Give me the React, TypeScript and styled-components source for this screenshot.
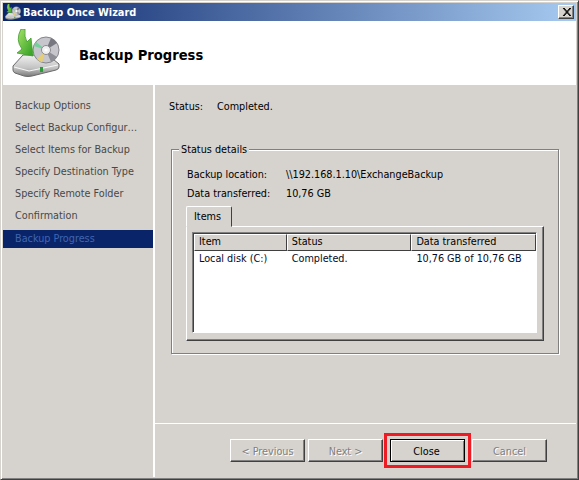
import React from 'react';
import styled, { createGlobalStyle } from 'styled-components';

const GlobalStyle = createGlobalStyle`
  html, body {
    margin: 0;
    padding: 0;
    background: #d6d3ce;
  }
  body {
    font-family: "DejaVu Sans Condensed", "Liberation Sans", Arial, sans-serif;
    font-size: 10.75px;
    color: #000;
  }
`;

const STEPS = [
  'Backup Options',
  'Select Backup Configur…',
  'Select Items for Backup',
  'Specify Destination Type',
  'Specify Remote Folder',
  'Confirmation',
  'Backup Progress',
];

const BackupIcon = ({ size }: { size: number }) => (
  <svg width={size} height={size} viewBox="0 0 48 48">
    <defs>
      <linearGradient id="drive" x1="0" y1="0" x2="0" y2="1">
        <stop offset="0" stopColor="#f0f0f0" />
        <stop offset="0.6" stopColor="#c4c4c4" />
        <stop offset="1" stopColor="#7a7a7a" />
      </linearGradient>
      <linearGradient id="arrow" x1="0" y1="0" x2="1" y2="1">
        <stop offset="0" stopColor="#a8e468" />
        <stop offset="1" stopColor="#2f9e22" />
      </linearGradient>
    </defs>
    <path d="M1 37 L11 26 H36 L47 35 V38 Q47 40 44 41 L20 47 Q16 48 12 47 L3 44 Q1 43 1 41 Z" fill="url(#drive)" stroke="#6a6a6a" strokeWidth="1" />
    <path d="M2 38 L17 42 L46 36" fill="none" stroke="#f6f6f6" strokeWidth="1.2" />
    <rect x="28" y="38" width="3" height="5" fill="#2f9a3a" />
    <circle cx="34" cy="21" r="13" fill="#c6c6cc" stroke="#85858c" strokeWidth="1" />
    <path d="M34 21 L22 17 A13 13 0 0 1 24 13 Z" fill="#72d09a" />
    <path d="M34 21 L25 30 A13 13 0 0 0 30 33.4 Z" fill="#e4cf78" />
    <path d="M34 21 L45 14 A13 13 0 0 0 39 9 Z" fill="#77777f" />
    <path d="M34 21 L39 33 A13 13 0 0 0 45 28 Z" fill="#8e8e96" />
    <circle cx="34" cy="21" r="4.5" fill="#f0f0f0" stroke="#8a8a90" strokeWidth="1" />
    <circle cx="34" cy="21" r="1.6" fill="#fff" />
    <path d="M9 0 L13 0 Q12 8 15 13 L19 9 L21 27 L5 24 L10 20 Q3 11 9 0 Z" fill="url(#arrow)" stroke="#3f9a2c" strokeWidth="0.8" />
  </svg>
);

const App = () => (
  <>
    <GlobalStyle />
    <Window>
      <TitleBar>
        <BackupIcon size={16} />
        <TitleText>Backup Once Wizard</TitleText>
        <CloseBox>
          <svg width="9" height="8" viewBox="0 0 9 8">
            <path d="M1 0 L8 8 M2 0 L9 8 M8 0 L1 8 M9 0 L2 8" stroke="#000" strokeWidth="1" fill="none" />
          </svg>
        </CloseBox>
      </TitleBar>
      <Header>
        <BackupIcon size={48} />
        <Heading>Backup Progress</Heading>
      </Header>
      <Body>
        <Sidebar>
          {STEPS.map((step, i) => (
            <Step key={step} $active={i === STEPS.length - 1}>{step}</Step>
          ))}
        </Sidebar>
        <Content>
          <Main>
            <StatusRow>
              <StatusLabel>Status:</StatusLabel>
              <span>Completed.</span>
            </StatusRow>
            <GroupBox>
              <Legend>Status details</Legend>
              <DetailRow>
                <DetailLabel>Backup location:</DetailLabel>
                <span>\\192.168.1.10\ExchangeBackup</span>
              </DetailRow>
              <DetailRow>
                <DetailLabel>Data transferred:</DetailLabel>
                <span>10,76 GB</span>
              </DetailRow>
              <Tab>Items</Tab>
              <TabPanel>
                <ListView>
                  <HeaderRow>
                    <HeaderCell $w={93}>Item</HeaderCell>
                    <HeaderCell $w={125}>Status</HeaderCell>
                    <HeaderCell $w={125}>Data transferred</HeaderCell>
                  </HeaderRow>
                  <DataRow>
                    <DataCell $w={93}>Local disk (C:)</DataCell>
                    <DataCell $w={125}>Completed.</DataCell>
                    <DataCell $w={125}>10,76 GB of 10,76 GB</DataCell>
                  </DataRow>
                </ListView>
              </TabPanel>
            </GroupBox>
          </Main>
          <Footer>
            <WizardButton disabled>&lt; Previous</WizardButton>
            <WizardButton disabled>Next &gt;</WizardButton>
            <PrimaryButton>Close</PrimaryButton>
            <WizardButton disabled>Cancel</WizardButton>
          </Footer>
        </Content>
      </Body>
    </Window>
  </>
);

const Window = styled.div`
  box-sizing: border-box;
  width: 579px;
  height: 480px;
  display: flex;
  flex-direction: column;
  overflow: hidden;
  background: #d6d3ce;
  border: 1px solid;
  border-color: #d6d3ce #404040 #404040 #d6d3ce;
  box-shadow: inset 1px 1px 0 #fff, inset -1px -1px 0 #808080;
  padding: 2px;
`;

const TitleBar = styled.div`
  height: 18px;
  flex: none;
  display: flex;
  align-items: center;
  gap: 2px;
  padding: 0 2px 0 2px;
  background: linear-gradient(to right, #0a246a, #a6caf0);
`;

const TitleText = styled.span`
  flex: 1;
  color: #fff;
  font-weight: bold;
  font-size: 10.9px;
`;

const CloseBox = styled.div`
  box-sizing: border-box;
  width: 16px;
  height: 14px;
  display: flex;
  align-items: center;
  justify-content: center;
  background: #d6d3ce;
  border: 1px solid;
  border-color: #fff #404040 #404040 #fff;
  box-shadow: inset -1px -1px 0 #808080;
`;

const Header = styled.div`
  height: 64px;
  flex: none;
  display: flex;
  align-items: center;
  gap: 19px;
  padding: 0 0 0 9px;
  background: #fff;
`;

const Heading = styled.h1`
  margin: 3px 0 0;
  font-size: 14.6px;
  font-weight: bold;
  color: #000;
`;

const Body = styled.div`
  flex: 1;
  display: flex;
  min-height: 0;
`;

const Sidebar = styled.div`
  width: 150px;
  flex: none;
  display: flex;
  flex-direction: column;
  gap: 4px;
  padding-top: 12px;
  border-right: 2px solid #fff;
`;

const Step = styled.div<{ $active?: boolean }>`
  height: 18px;
  line-height: 18px;
  padding-left: 12px;
  white-space: nowrap;
  color: ${({ $active }) => ($active ? '#4066b0' : '#484848')};
  background: ${({ $active }) => ($active ? '#0a246a' : 'transparent')};
  margin-top: ${({ $active }) => ($active ? '1px' : '0')};
`;

const Content = styled.div`
  flex: 1;
  display: flex;
  flex-direction: column;
  min-width: 0;
`;

const Main = styled.div`
  flex: 1;
  padding: 15px 18px 0 14px;
  border-bottom: 1px solid #fff;
`;

const StatusRow = styled.div`
  display: flex;
  line-height: 14px;
  margin-bottom: 35px;
`;

const StatusLabel = styled.span`
  width: 48px;
`;

const GroupBox = styled.div`
  position: relative;
  box-sizing: border-box;
  width: 388px;
  height: 205px;
  margin-left: 2px;
  padding: 15px 14px 0 15px;
  border: 1px solid #808080;
  box-shadow: 1px 1px 0 #fff, inset 1px 1px 0 #fff;
`;

const Legend = styled.span`
  position: absolute;
  top: -7px;
  left: 7px;
  padding: 0 2px;
  line-height: 14px;
  background: #d6d3ce;
`;

const DetailRow = styled.div`
  display: flex;
  height: 19px;
  line-height: 19px;
`;

const DetailLabel = styled.span`
  width: 99px;
`;

const Tab = styled.div`
  position: relative;
  z-index: 1;
  box-sizing: border-box;
  width: 46px;
  height: 21px;
  margin: 3px 0 -1px -1px;
  padding: 3px 0 0 7px;
  background: #d6d3ce;
  border: 1px solid;
  border-color: #fff #404040 #d6d3ce #fff;
  border-radius: 2px 2px 0 0;
`;

const TabPanel = styled.div`
  box-sizing: border-box;
  width: 358px;
  height: 115px;
  margin-left: -1px;
  padding: 5px 6px 6px 5px;
  background: #d6d3ce;
  border: 1px solid;
  border-color: #fff #404040 #404040 #fff;
  box-shadow: inset -1px -1px 0 #808080;
`;

const ListView = styled.div`
  box-sizing: border-box;
  height: 101px;
  background: #fff;
  border: 1px solid;
  border-color: #808080 #fff #fff #808080;
  box-shadow: inset 1px 1px 0 #404040;
  padding: 1px 0 0 1px;
`;

const HeaderRow = styled.div`
  display: flex;
`;

const HeaderCell = styled.div<{ $w: number }>`
  box-sizing: border-box;
  width: ${({ $w }) => $w}px;
  height: 17px;
  line-height: 14px;
  padding-left: 4px;
  background: #d6d3ce;
  border: 1px solid;
  border-color: #fff #404040 #404040 #fff;
`;

const DataRow = styled.div`
  display: flex;
  padding-top: 1px;
  line-height: 14px;
  color: #050a28;
`;

const DataCell = styled.div<{ $w: number }>`
  box-sizing: border-box;
  width: ${({ $w }) => $w}px;
  padding-left: 5px;
  white-space: nowrap;
`;

const Footer = styled.div`
  height: 53px;
  flex: none;
  display: flex;
  justify-content: flex-end;
  gap: 3px;
  padding: 15px 29px 0 0;
  box-sizing: border-box;
`;

const WizardButton = styled.button`
  box-sizing: border-box;
  width: 75px;
  height: 23px;
  padding: 2px 0 0;
  font: inherit;
  color: #808080;
  background: #d6d3ce;
  border: 1px solid;
  border-color: #fff #404040 #404040 #fff;
  box-shadow: inset -1px -1px 0 #808080;
  &:disabled {
    text-shadow: 1px 1px 0 #fff;
  }
`;

const PrimaryButton = styled(WizardButton)`
  position: relative;
  margin: 0 4px;
  padding-right: 2px;
  color: #000;
  border-color: #000;
  box-shadow: inset 1px 1px 0 #fff, inset -1px -1px 0 #808080;
  &::after {
    content: '';
    position: absolute;
    inset: -7px -7px -7px -7px;
    border: 3px solid #ed1c24;
  }
`;

export default App;
